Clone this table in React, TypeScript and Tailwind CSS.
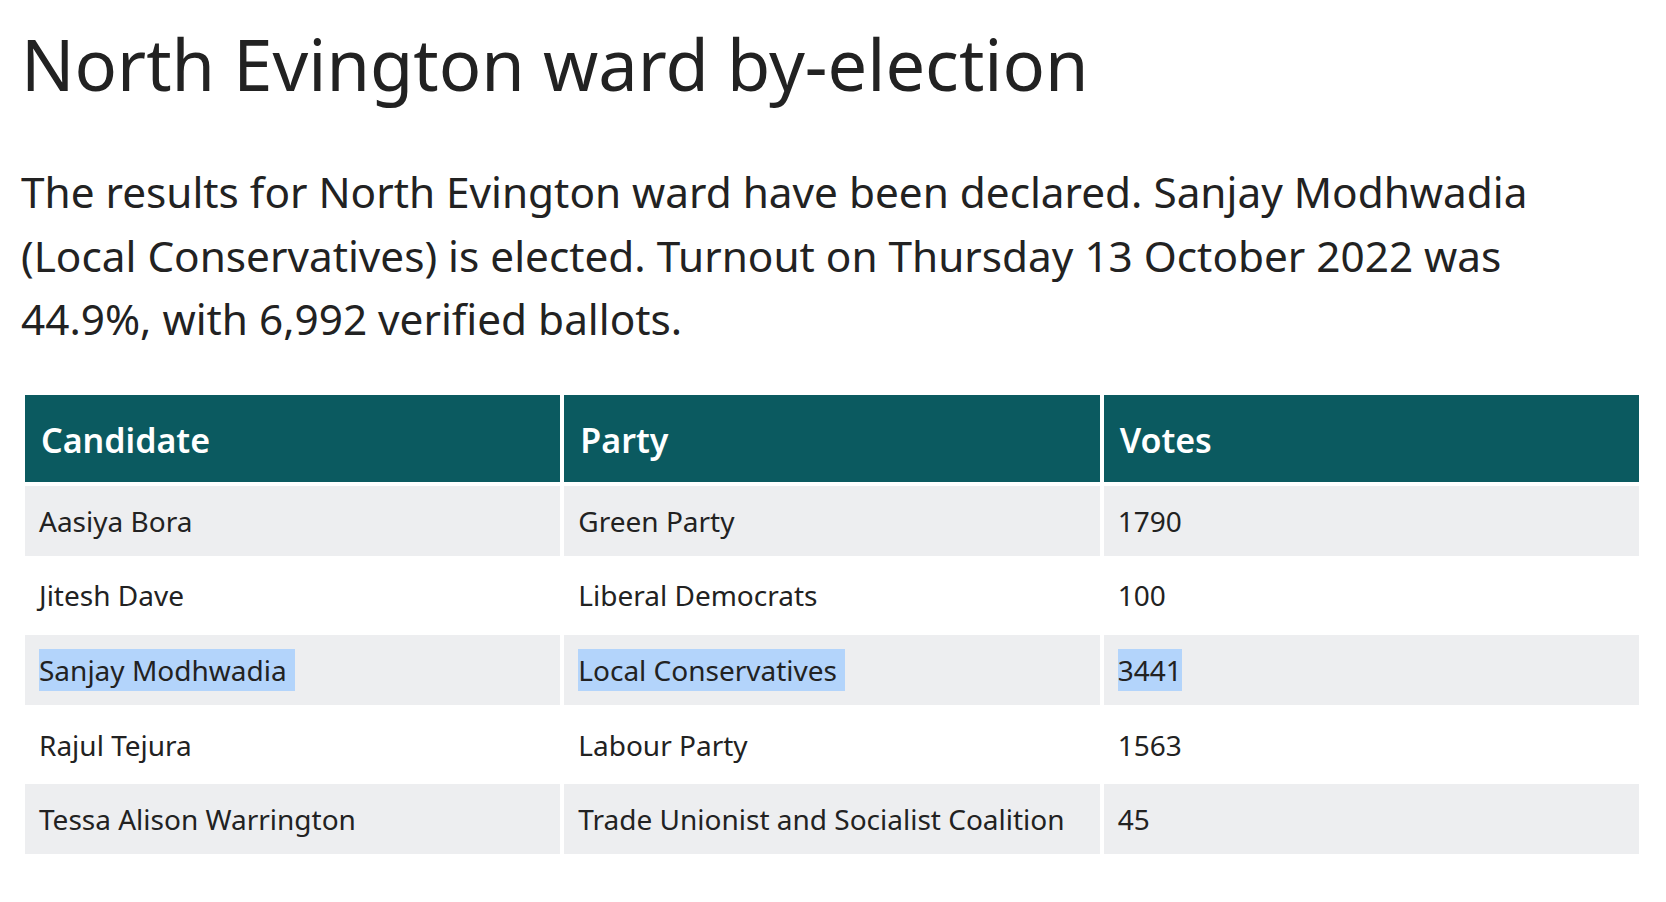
import React from 'react';

type Result = {
  candidate: string;
  party: string;
  votes: number;
  elected?: boolean;
};

const results: Result[] = [
  { candidate: 'Aasiya Bora', party: 'Green Party', votes: 1790 },
  { candidate: 'Jitesh Dave', party: 'Liberal Democrats', votes: 100 },
  { candidate: 'Sanjay Modhwadia', party: 'Local Conservatives', votes: 3441, elected: true },
  { candidate: 'Rajul Tejura', party: 'Labour Party', votes: 1563 },
  { candidate: 'Tessa Alison Warrington', party: 'Trade Unionist and Socialist Coalition', votes: 45 },
];

// the winning row is shown as if the text had been selected
function Marked({ on, pad, children }: { on?: boolean; pad?: boolean; children: React.ReactNode }) {
  if (!on) return <>{children}</>;
  return <span className={`inline-block bg-[#b3d4fb] ${pad ? 'pr-[8px]' : ''}`}>{children}</span>;
}

export default function App() {
  return (
    <div className="min-h-screen bg-white pl-[21px] pr-[23px] pt-[21px] text-[#222] font-['Noto_Sans',sans-serif]">
      <h1 className="text-[70.4px] leading-[86px] font-normal">North Evington ward by-election</h1>

      <p className="mt-[53px] max-w-[1560px] text-[42.3px] leading-[63.5px]">
        The results for North Evington ward have been declared. Sanjay Modhwadia (Local Conservatives) is
        elected. Turnout on Thursday 13 October 2022 was 44.9%, with 6,992 verified ballots.
      </p>

      <table className="mt-[40px] w-full table-fixed border-separate border-spacing-[4px] text-left">
        <thead>
          <tr>
            <th className="h-[87px] bg-[#0b5a60] px-[16px] pt-[18px] pb-[15px] text-[34px] leading-[54px] font-semibold text-white">Candidate</th>
            <th className="h-[87px] bg-[#0b5a60] px-[16px] pt-[18px] pb-[15px] text-[34px] leading-[54px] font-semibold text-white">Party</th>
            <th className="h-[87px] bg-[#0b5a60] px-[16px] pt-[18px] pb-[15px] text-[34px] leading-[54px] font-semibold text-white">Votes</th>
          </tr>
        </thead>
        <tbody>
          {results.map((r, i) => {
            const bg = i % 2 === 0 ? 'bg-[#edeef0]' : 'bg-white';
            return (
              <tr key={r.candidate}>
                <td className={`h-[70.6px] px-[14px] text-[28px] leading-[42px] align-middle ${bg}`}>
                  <Marked on={r.elected} pad>{r.candidate}</Marked>
                </td>
                <td className={`h-[70.6px] px-[14px] text-[28px] leading-[42px] align-middle ${bg}`}>
                  <Marked on={r.elected} pad>{r.party}</Marked>
                </td>
                <td className={`h-[70.6px] px-[14px] text-[28px] leading-[42px] align-middle ${bg}`}>
                  <Marked on={r.elected}>{r.votes}</Marked>
                </td>
              </tr>
            );
          })}
        </tbody>
      </table>
    </div>
  );
}
